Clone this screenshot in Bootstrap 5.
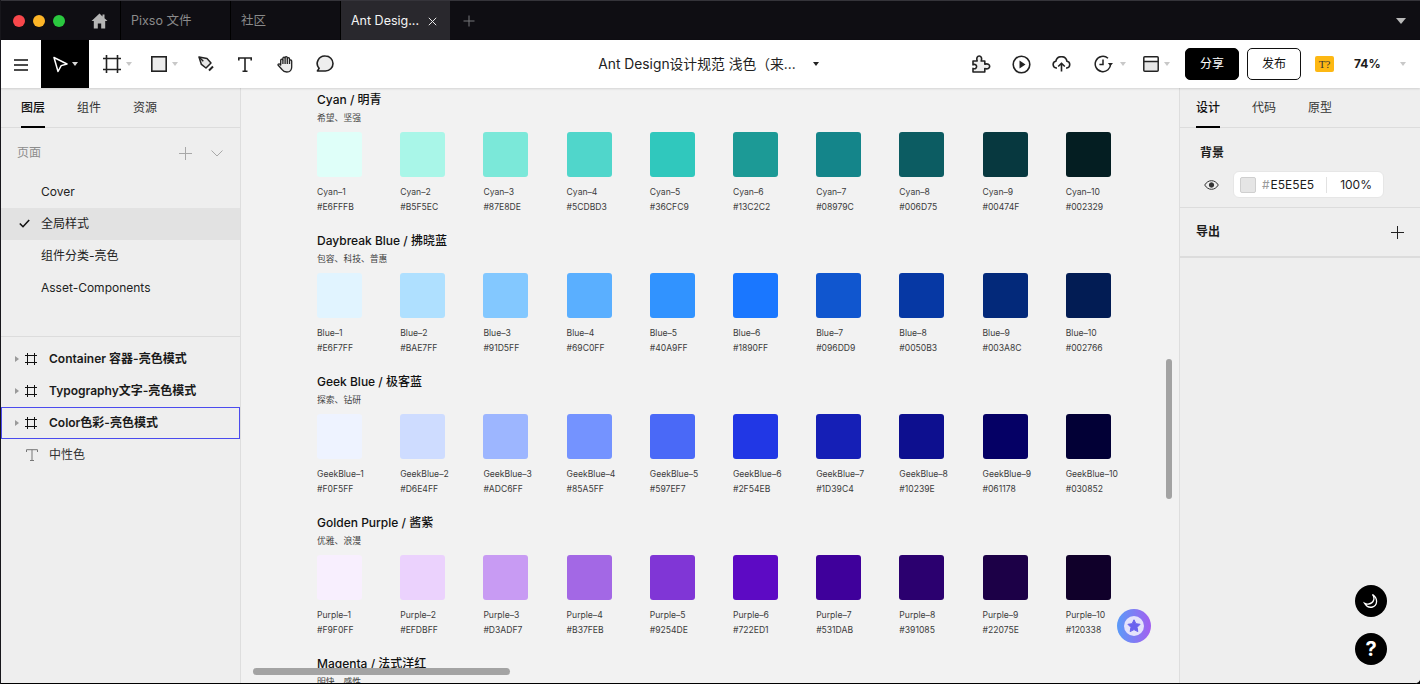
<!DOCTYPE html>
<html lang="zh-CN">
<head>
<meta charset="utf-8">
<title>Ant Design设计规范</title>
<link rel="stylesheet" href="https://cdn.jsdelivr.net/npm/bootstrap@5.3.0/dist/css/bootstrap.min.css">
<style>
html,body{height:684px;overflow:hidden;background:#000;}
body{font-family:Inter,"Noto Sans CJK SC",sans-serif;font-size:12px;color:#1c1c1c;}
.win{width:1420px;height:684px;border-left:1px solid #17161b;border-bottom:1px solid #000;border-bottom-right-radius:5px;overflow:hidden;background:#eee;}
.ttl{height:40px;flex:none;background:#0f0e13;border-top:1px solid #35343a;margin-left:-1px;color:#8b8b8b;font-size:12.5px;}
.lights{width:80px;padding-left:13px;gap:8px;}
.lt{width:12px;height:12px;border-radius:50%;}
.homebox{width:40px;padding-left:11px;}
.ttab{width:110px;height:39px;padding:1px 0 0 10px;border-left:1px solid #000;}
.ttab.on{background:#29282d;color:#f4f4f4;}
.tclose{margin-left:9px;}
.tplus{margin-left:13px;}
.tool{height:48px;flex:none;background:#fff;box-shadow:0 1px 2px rgba(0,0,0,.13);position:relative;z-index:2;margin-left:-1px;}
.side{flex:1 1 0;}
.burger{width:41px;padding-left:14px;}
.sel{width:48px;height:48px;background:#000;}
.tbtn{height:48px;}
.w40{width:40px}
.cap{width:0;height:0;border-left:3.5px solid transparent;border-right:3.5px solid transparent;border-top:4px solid #c8c8c8;margin-left:5px;}
.cap.dk{border-top-color:#222;border-left-width:3px;border-right-width:3px;}
.cap.wh{border-top-color:#d8d8d8;margin-left:4px;}
.doc{font-size:13.8px;color:#222;white-space:nowrap;margin-left:-3px;}
.doc .cap{margin-left:17px;}
.btn.shr,.btn.pub{width:54px;height:32px;font-size:12px;padding:0;border-radius:5px;line-height:30px;}
.btn.shr{background:#000;border:1px solid #000;color:#fff;margin-left:13px;}
.btn.pub{background:#fff;border:1px solid #111;color:#111;margin-left:8px;}
.tq{width:19px;height:16px;background:#fdb813;border-radius:2px;font-family:"Liberation Serif",serif;font-size:11px;line-height:16px;text-align:center;color:#333;margin-left:14px;}
.zoomv{font-weight:700;font-size:12px;width:46px;margin-left:20px;}
.body{min-height:0;}
.pl{width:240px;flex:none;background:#eee;border-right:1px solid #dedede;position:relative;}
.pr{width:241px;flex:none;background:#eee;border-left:1px solid #dedede;position:relative;}
.ptabs{height:40px;border-bottom:1px solid #dcdcdc;padding-left:20px;gap:32px;flex:none;}
.pr .ptabs{padding-left:16px;}
.ptab{height:39px;line-height:39px;color:#333;position:relative;font-size:12px;}
.ptab.on{color:#111;font-weight:500;}
.ptab.on::after{content:"";position:absolute;left:0;right:0;bottom:-1px;height:2px;background:#000;}
.phead{height:48px;padding:2px 17px 0 16px;color:#8c8c8c;}
.prow{height:32px;padding-left:40px;position:relative;line-height:32px;color:#222;}
.prow.cur{background:#e2e2e2;}
.chk{position:absolute;left:18px;top:11px;}
.pages{height:209px;flex:none;border-bottom:1px solid #dcdcdc;}
.lrows{padding-top:6px;}
.lrow{height:32px;padding-left:14px;font-weight:600;color:#1a1a1a;}
.lrow.out{outline:1px solid #4b4bee;outline-offset:-1px;}
.lrow.plain{font-weight:400;padding-left:25px;color:#333;}
.tri{width:0;height:0;border-top:3.5px solid transparent;border-bottom:3.5px solid transparent;border-left:4px solid #9a9a9a;margin-right:6px;}
.ficon{width:12px;margin-right:12px;flex:none;}
.lrow.plain .ficon{margin-right:11px;}
.cv{flex:1 1 0;min-width:0;background:#f2f2f2;position:relative;overflow:hidden;padding:5px 0 0 76px;}
.sect{height:141px;flex:none;}
.sh{font-size:12px;line-height:14px;font-weight:500;color:#111;white-space:nowrap;}
.ss{font-size:8.8px;line-height:12px;margin-top:5px;color:#444;white-space:nowrap;}
.swrow{margin-top:8px;}
.cell{width:83.2px;flex:none;font-size:8.6px;color:#3c3c3c;white-space:nowrap;}
.chip{width:45px;height:45px;border-radius:3px;margin-bottom:8px;}
.cl{line-height:15px;}
.vbar{position:absolute;left:925px;top:271px;width:6px;height:140px;background:#a3a3a3;border-radius:3px;}
.hbar{position:absolute;left:12px;top:580px;width:257px;height:7px;background:#a3a3a3;border-radius:4px;}
.star{position:absolute;left:876px;top:521px;width:34px;height:34px;border-radius:50%;background:linear-gradient(90deg,#5a9bf8,#a35ff0);}
.bgr{padding:18px 0 0 20px;border-bottom:1px solid #dcdcdc;font-weight:600;flex:none;line-height:14px;height:80px;}
.fld{width:151px;height:27px;background:#fff;border-radius:6px;border:1px solid #e6e6e6;padding-left:6px;font-weight:400;margin-left:14px;font-size:12px;}
.fsw{width:16px;height:16px;background:#e5e5e5;border:1px solid #cfcfcf;border-radius:2px;}
.fhash{color:#9a9a9a;margin:0 1px 0 6px;}
.fsep{width:1px;height:16px;background:#e2e2e2;margin:0 13px 0 12px;}
.eyerow{margin-top:11px;}
.exp{height:50px;padding:0 16px 0 16px;border-bottom:2px solid #dcdcdc;font-weight:600;flex:none;}
.round{position:absolute;left:175px;width:32px;height:32px;background:#000;border-radius:50%;color:#fff;}
.rm{top:497px;}
.rh{top:545px;font-weight:700;font-size:20px;line-height:1;font-family:Inter,sans-serif;}
</style>
</head>
<body>
<div class="win d-flex flex-column">
  <div class="ttl d-flex align-items-center">
    <div class="lights d-flex">
      <span class="lt" style="background:#f8474b"></span><span class="lt" style="background:#fdb527"></span><span class="lt" style="background:#2ac83f"></span>
    </div>
    <div class="homebox"><svg width="17" height="16" viewBox="0 0 17 16" fill="#b5b5b5"><path d="M8.5 0.5 0.5 8h2.3v7.5h4v-5h3.4v5h4V8h2.3L13.5 5.2V1.5h-2v1.9z"/></svg></div>
    <div class="ttab d-flex align-items-center">Pixso 文件</div>
    <div class="ttab d-flex align-items-center">社区</div>
    <div class="ttab on d-flex align-items-center">Ant Desig...<svg class="tclose" width="9" height="9" viewBox="0 0 9 9" stroke="#e8e8e8" fill="none"><path d="M.8.8l7.4 7.4M8.2.8.8 8.2"/></svg></div>
    <svg class="tplus" width="12" height="12" viewBox="0 0 12 12" stroke="#77767b" fill="none"><path d="M6 .5v11M.5 6h11"/></svg>
    <span class="ms-auto cap" style="border-left-width:5px;border-right-width:5px;border-top:6px solid #b9b9b9;margin-right:14px"></span>
  </div>

  <div class="tool d-flex align-items-center">
    <div class="side d-flex align-items-center">
      <div class="burger"><svg width="14" height="12" viewBox="0 0 14 12" stroke="#111" stroke-width="1.4" fill="none"><path d="M0 1h14M0 6h14M0 11h14"/></svg></div>
      <div class="sel d-flex align-items-center justify-content-center"><svg width="16" height="17" viewBox="0 0 16 17" fill="none" stroke="#fff" stroke-width="1.5" stroke-linejoin="round"><path d="M2 1.5 15 8l-5.8 1.6L6 15.5z"/></svg><span class="cap wh"></span></div>
      <div class="tbtn d-flex align-items-center" style="width:62px;padding-left:14px"><svg width="18" height="18" viewBox="0 0 18 18" fill="none" stroke="#222" stroke-width="1.6"><path d="M3.5 0v18M14.5 0v18M0 3.5h18M0 14.5h18"/></svg><span class="cap"></span></div>
      <div class="tbtn d-flex align-items-center" style="width:47px"><svg width="16" height="16" viewBox="0 0 16 16" fill="#ececec" stroke="#222" stroke-width="1.6"><rect x=".8" y=".8" width="14.4" height="14.4"/></svg><span class="cap"></span></div>
      <div class="tbtn d-flex align-items-center" style="width:40px"><svg width="17" height="17" viewBox="0 0 17 17" fill="#e6e6e6" stroke="#222" stroke-width="1.5" stroke-linejoin="round"><path d="M1 1l8 1.6 4 4.400-5 5-4.600-3.600z"/><path d="M1.300 1.300l4 4" fill="none"/><path d="M11 14.500l4-4" fill="none" stroke-width="2"/></svg></div>
      <div class="tbtn d-flex align-items-center" style="width:39px"><svg width="14" height="15" viewBox="0 0 14 15" fill="none" stroke="#222" stroke-width="1.6"><path d="M.8 3.500V1h12.400v2.500M7 1v13.200M4.500 14.200h5"/></svg></div>
      <div class="tbtn d-flex align-items-center" style="width:39px"><svg width="17" height="17" viewBox="0 0 17 17" fill="#eee" stroke="#222" stroke-width="1.300" stroke-linejoin="round"><path d="M3.700 9V4.200a1.100 1.100 0 0 1 2.200 0V2.200a1.100 1.100 0 0 1 2.200 0V1.800a1.100 1.100 0 0 1 2.200 0V2.700a1.100 1.100 0 0 1 2.200 0V5a1.100 1.100 0 0 1 2.200 0V10.500C14.900 14 13 16 9.800 16 7.500 16 6 15 4.800 13.300L1.200 9.300C.6 8.300 2 7.300 3 8.200z"/><path d="M5.900 4.200V8M8.100 2.200V8M10.300 2.700V8M12.500 5V8" fill="none"/></svg></div>
      <div class="tbtn d-flex align-items-center"><svg width="18" height="18" viewBox="0 0 18 18" fill="#eee" stroke="#222" stroke-width="1.600" stroke-linejoin="round"><path d="M9.500 1a7.500 7.500 0 0 1 0 15H1.400l1.700-2.600A7.500 7.500 0 0 1 9.500 1z"/></svg></div>
    </div>
    <div class="doc d-flex align-items-center">Ant Design设计规范 浅色（来...<span class="cap dk"></span></div>
    <div class="side d-flex align-items-center justify-content-end">
      <div class="tbtn w40 d-flex align-items-center"><svg width="19" height="19" viewBox="0 0 19 19" fill="#eee" stroke="#222" stroke-width="1.600" stroke-linejoin="round"><path d="M1 6h4.200C4 3 5.400 1 7.200 1S10.400 3 9.200 6h3.600v3.200c2.800-1 4.900.3 4.900 2.100s-2.100 3.200-4.900 2.200V17H1v-3.600c2 1 3.600-.2 3.600-1.800S3 8.800 1 9.800z"/></svg></div>
      <div class="tbtn w40 d-flex align-items-center"><svg width="19" height="19" viewBox="0 0 19 19" fill="none" stroke="#222" stroke-width="1.600"><circle cx="9.500" cy="9.500" r="8.300"/><path d="M7.500 5.500l6 4-6 4z" fill="#222" stroke="none"/></svg></div>
      <div class="tbtn d-flex align-items-center" style="width:42px"><svg width="19" height="16" viewBox="0 0 19 16" fill="none" stroke="#222" stroke-width="1.600" stroke-linejoin="round"><path d="M5 12H4.200A3.400 3.400 0 0 1 3.800 5.300 5.700 5.700 0 0 1 15 5.300 3.400 3.400 0 0 1 14.800 12H14"/><path d="M9.500 15.500V7.500M6.200 10.500l3.300-3.300 3.300 3.300"/></svg></div>
      <div class="tbtn d-flex align-items-center" style="width:49px"><svg width="19" height="18" viewBox="0 0 19 18" fill="none" stroke="#222" stroke-width="1.500"><path d="M16.600 8.500A7.700 7.700 0 1 1 14 3.200M9 4.500V9.400H5.400"/><path d="M13.800 8h5.200l-2.600 3z" fill="#222" stroke="none"/></svg><span class="cap" style="margin-left:7px"></span></div>
      <div class="tbtn d-flex align-items-center" style="width:29px"><svg width="16" height="16" viewBox="0 0 16 16" fill="none" stroke="#222" stroke-width="1.500"><rect x="1.500" y="6" width="13" height="8.600" fill="#e6e6e6" stroke="none"/><rect x=".8" y=".8" width="14.400" height="14.400" rx="1"/><path d="M.8 5.500h14.400"/></svg><span class="cap"></span></div>
      <button class="btn shr">分享</button>
      <button class="btn pub">发布</button>
      <div class="tq">T?</div>
      <div class="zoomv">74%</div>
      <span class="cap" style="margin:0 14px 0 0"></span>
    </div>
  </div>

  <div class="body d-flex flex-grow-1">
    <aside class="pl d-flex flex-column">
      <div class="ptabs d-flex"><div class="ptab on">图层</div><div class="ptab">组件</div><div class="ptab">资源</div></div>
      <div class="pages">
        <div class="phead d-flex align-items-center justify-content-between">
          <span>页面</span>
          <span class="d-flex align-items-center" style="gap:19px">
            <svg width="13" height="13" viewBox="0 0 13 13" stroke="#a8a8a8" fill="none"><path d="M6.500 0v13M0 6.500h13"/></svg>
            <svg width="12" height="7" viewBox="0 0 12 7" stroke="#a8a8a8" fill="none"><path d="M.5.500 6 6 11.500.500"/></svg>
          </span>
        </div>
        <div class="prow">Cover</div>
        <div class="prow cur"><svg class="chk" width="11" height="9" viewBox="0 0 11 9" stroke="#111" stroke-width="1.600" fill="none"><path d="M.8 4.500 4 7.700 10.200 1"/></svg>全局样式</div>
        <div class="prow">组件分类-亮色</div>
        <div class="prow">Asset-Components</div>
      </div>
      <div class="lrows">
        <div class="lrow d-flex align-items-center"><span class="tri"></span><svg class="ficon" width="12" height="12" viewBox="0 0 12 12" stroke="#111" fill="none"><path d="M2.500 0v12M9.500 0v12M0 2.500h12M0 9.500h12"/></svg>Container 容器-亮色模式</div>
        <div class="lrow d-flex align-items-center"><span class="tri"></span><svg class="ficon" width="12" height="12" viewBox="0 0 12 12" stroke="#111" fill="none"><path d="M2.500 0v12M9.500 0v12M0 2.500h12M0 9.500h12"/></svg>Typography文字-亮色模式</div>
        <div class="lrow out d-flex align-items-center"><span class="tri"></span><svg class="ficon" width="12" height="12" viewBox="0 0 12 12" stroke="#111" fill="none"><path d="M2.500 0v12M9.500 0v12M0 2.500h12M0 9.500h12"/></svg>Color色彩-亮色模式</div>
        <div class="lrow plain d-flex align-items-center"><svg class="ficon" width="12" height="12" viewBox="0 0 12 12" stroke="#777" fill="none"><path d="M.5 3V.7h11V3M6 .7v10.800M4 11.500h4"/></svg>中性色</div>
      </div>
    </aside>

    <main class="cv d-flex flex-column">
      <section class="sect">
        <div class="sh">Cyan / 明青</div><div class="ss">希望、坚强</div>
        <div class="swrow d-flex">
          <div class="cell"><div class="chip" style="background:#DFFFF9"></div><div class="cl">Cyan–1</div><div class="cl">#E6FFFB</div></div>
          <div class="cell"><div class="chip" style="background:#A9F6E8"></div><div class="cl">Cyan–2</div><div class="cl">#B5F5EC</div></div>
          <div class="cell"><div class="chip" style="background:#7BE8D9"></div><div class="cl">Cyan–3</div><div class="cl">#87E8DE</div></div>
          <div class="cell"><div class="chip" style="background:#50D6CB"></div><div class="cl">Cyan–4</div><div class="cl">#5CDBD3</div></div>
          <div class="cell"><div class="chip" style="background:#30C8BD"></div><div class="cl">Cyan–5</div><div class="cl">#36CFC9</div></div>
          <div class="cell"><div class="chip" style="background:#1C9A96"></div><div class="cl">Cyan–6</div><div class="cl">#13C2C2</div></div>
          <div class="cell"><div class="chip" style="background:#14858A"></div><div class="cl">Cyan–7</div><div class="cl">#08979C</div></div>
          <div class="cell"><div class="chip" style="background:#0C5C62"></div><div class="cl">Cyan–8</div><div class="cl">#006D75</div></div>
          <div class="cell"><div class="chip" style="background:#07383F"></div><div class="cl">Cyan–9</div><div class="cl">#00474F</div></div>
          <div class="cell"><div class="chip" style="background:#041E22"></div><div class="cl">Cyan–10</div><div class="cl">#002329</div></div>
        </div>
      </section>
      <section class="sect">
        <div class="sh">Daybreak Blue / 拂晓蓝</div><div class="ss">包容、科技、普惠</div>
        <div class="swrow d-flex">
          <div class="cell"><div class="chip" style="background:#E1F4FF"></div><div class="cl">Blue–1</div><div class="cl">#E6F7FF</div></div>
          <div class="cell"><div class="chip" style="background:#AFE0FF"></div><div class="cl">Blue–2</div><div class="cl">#BAE7FF</div></div>
          <div class="cell"><div class="chip" style="background:#83C8FF"></div><div class="cl">Blue–3</div><div class="cl">#91D5FF</div></div>
          <div class="cell"><div class="chip" style="background:#5AAFFF"></div><div class="cl">Blue–4</div><div class="cl">#69C0FF</div></div>
          <div class="cell"><div class="chip" style="background:#3193FF"></div><div class="cl">Blue–5</div><div class="cl">#40A9FF</div></div>
          <div class="cell"><div class="chip" style="background:#1A77FF"></div><div class="cl">Blue–6</div><div class="cl">#1890FF</div></div>
          <div class="cell"><div class="chip" style="background:#1056CF"></div><div class="cl">Blue–7</div><div class="cl">#096DD9</div></div>
          <div class="cell"><div class="chip" style="background:#0638A4"></div><div class="cl">Blue–8</div><div class="cl">#0050B3</div></div>
          <div class="cell"><div class="chip" style="background:#03297A"></div><div class="cl">Blue–9</div><div class="cl">#003A8C</div></div>
          <div class="cell"><div class="chip" style="background:#021C54"></div><div class="cl">Blue–10</div><div class="cl">#002766</div></div>
        </div>
      </section>
      <section class="sect">
        <div class="sh">Geek Blue / 极客蓝</div><div class="ss">探索、钻研</div>
        <div class="swrow d-flex">
          <div class="cell"><div class="chip" style="background:#EEF3FF"></div><div class="cl">GeekBlue–1</div><div class="cl">#F0F5FF</div></div>
          <div class="cell"><div class="chip" style="background:#CEDCFF"></div><div class="cl">GeekBlue–2</div><div class="cl">#D6E4FF</div></div>
          <div class="cell"><div class="chip" style="background:#9DB6FF"></div><div class="cl">GeekBlue–3</div><div class="cl">#ADC6FF</div></div>
          <div class="cell"><div class="chip" style="background:#7493FF"></div><div class="cl">GeekBlue–4</div><div class="cl">#85A5FF</div></div>
          <div class="cell"><div class="chip" style="background:#4A69F7"></div><div class="cl">GeekBlue–5</div><div class="cl">#597EF7</div></div>
          <div class="cell"><div class="chip" style="background:#2137E5"></div><div class="cl">GeekBlue–6</div><div class="cl">#2F54EB</div></div>
          <div class="cell"><div class="chip" style="background:#151FB6"></div><div class="cl">GeekBlue–7</div><div class="cl">#1D39C4</div></div>
          <div class="cell"><div class="chip" style="background:#0D0F8F"></div><div class="cl">GeekBlue–8</div><div class="cl">#10239E</div></div>
          <div class="cell"><div class="chip" style="background:#050065"></div><div class="cl">GeekBlue–9</div><div class="cl">#061178</div></div>
          <div class="cell"><div class="chip" style="background:#020036"></div><div class="cl">GeekBlue–10</div><div class="cl">#030852</div></div>
        </div>
      </section>
      <section class="sect">
        <div class="sh">Golden Purple / 酱紫</div><div class="ss">优雅、浪漫</div>
        <div class="swrow d-flex">
          <div class="cell"><div class="chip" style="background:#F8EFFE"></div><div class="cl">Purple–1</div><div class="cl">#F9F0FF</div></div>
          <div class="cell"><div class="chip" style="background:#EBD2FD"></div><div class="cl">Purple–2</div><div class="cl">#EFDBFF</div></div>
          <div class="cell"><div class="chip" style="background:#C89BF3"></div><div class="cl">Purple–3</div><div class="cl">#D3ADF7</div></div>
          <div class="cell"><div class="chip" style="background:#A368E5"></div><div class="cl">Purple–4</div><div class="cl">#B37FEB</div></div>
          <div class="cell"><div class="chip" style="background:#8036D6"></div><div class="cl">Purple–5</div><div class="cl">#9254DE</div></div>
          <div class="cell"><div class="chip" style="background:#5D0AC4"></div><div class="cl">Purple–6</div><div class="cl">#722ED1</div></div>
          <div class="cell"><div class="chip" style="background:#3F009B"></div><div class="cl">Purple–7</div><div class="cl">#531DAB</div></div>
          <div class="cell"><div class="chip" style="background:#2B006F"></div><div class="cl">Purple–8</div><div class="cl">#391085</div></div>
          <div class="cell"><div class="chip" style="background:#1C0047"></div><div class="cl">Purple–9</div><div class="cl">#22075E</div></div>
          <div class="cell"><div class="chip" style="background:#10002A"></div><div class="cl">Purple–10</div><div class="cl">#120338</div></div>
        </div>
      </section>
      <section class="sect">
        <div class="sh">Magenta / 法式洋红</div><div class="ss">明快、感性</div>
      </section>
      <div class="vbar"></div>
      <div class="hbar"></div>
      <div class="star d-flex align-items-center justify-content-center">
        <svg width="20" height="20" viewBox="0 0 20 20"><circle cx="10" cy="10" r="10" fill="#e4e2fb"/><path d="M10 3.800l1.900 3.900 4.200.6-3 3 .7 4.300-3.800-2-3.800 2 .7-4.300-3-3 4.200-.6z" fill="#6a62ee" stroke="#6a62ee" stroke-linejoin="round"/></svg>
      </div>
    </main>

    <aside class="pr d-flex flex-column">
      <div class="ptabs d-flex"><div class="ptab on">设计</div><div class="ptab">代码</div><div class="ptab">原型</div></div>
      <div class="bgr">
        <div>背景</div>
        <div class="eyerow d-flex align-items-center">
          <svg class="ms-1" width="15" height="10" viewBox="0 0 15 10" fill="none" stroke="#333"><path d="M.7 5C2.500 2 5 .7 7.500.7S12.500 2 14.300 5C12.500 8 10 9.300 7.500 9.300S2.500 8 .7 5z"/><circle cx="7.500" cy="5" r="2.200" fill="#333"/></svg>
          <div class="fld d-flex align-items-center"><span class="fsw"></span><span class="fhash">#</span>E5E5E5<span class="fsep"></span>100%</div>
        </div>
      </div>
      <div class="exp d-flex align-items-center justify-content-between"><span>导出</span><svg width="13" height="13" viewBox="0 0 13 13" stroke="#222" fill="none"><path d="M6.500 0v13M0 6.500h13"/></svg></div>
      <div class="round rm d-flex align-items-center justify-content-center"><svg width="16" height="16" viewBox="0 0 16 16" fill="none" stroke="#fff" stroke-width="1.300"><path d="M9.500 1.500c2.500 3 2 8.500-4 9.500-1.500.2-2.700 0-3.800-.6C3.500 13.500 6.500 14.800 9.500 14c4.800-1.300 6-8.500 0-12.500z"/></svg></div>
      <div class="round rh d-flex align-items-center justify-content-center">?</div>
    </aside>
  </div>
</div>
<script src="https://cdn.jsdelivr.net/npm/bootstrap@5.3.0/dist/js/bootstrap.bundle.min.js"></script>
</body>
</html>
